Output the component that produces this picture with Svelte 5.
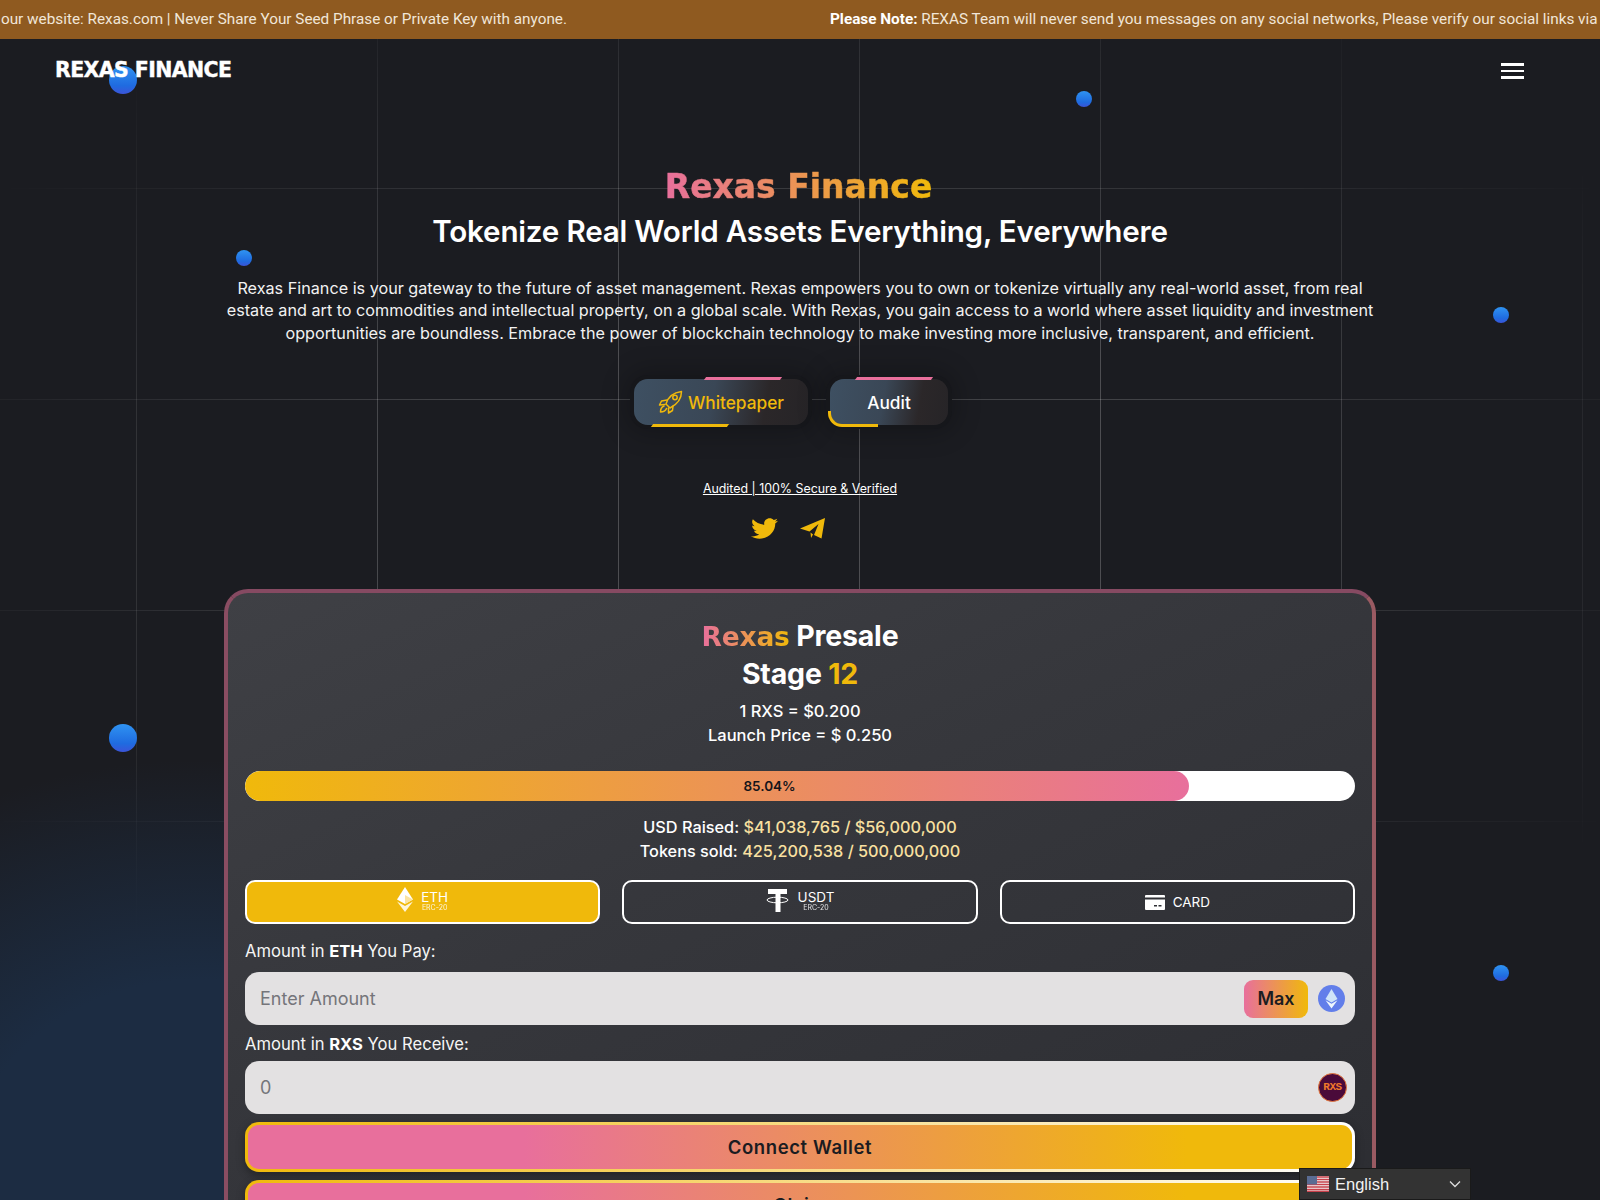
<script>
  const dots = [
    { x: 123, y: 80, r: 14 }, { x: 1084, y: 99, r: 8 }, { x: 244, y: 258, r: 8 },
    { x: 1501, y: 315, r: 8 }, { x: 123, y: 738, r: 14 }, { x: 1501, y: 973, r: 8 }
  ];
</script>

<div class="page">
  <div class="grid"></div>
  <div class="glow"></div>
  {#each dots as d}
    <span class="dot" style="left:{d.x - d.r}px;top:{d.y - d.r}px;width:{d.r * 2}px;height:{d.r * 2}px"></span>
  {/each}

  <div class="ticker">
    <div class="tick-first">
      <span class="tick"><b>Please Note:</b> REXAS Team will never send you messages on any social networks, Please verify our social links via our website: Rexas.com | Never Share Your Seed Phrase or Private Key with anyone.</span>
    </div>
    <span class="tick second"><b>Please Note:</b> REXAS Team will never send you messages on any social networks, Please verify our social links via our website: Rexas.com | Never Share Your Seed Phrase or Private Key with anyone.</span>
  </div>

  <header class="nav">
    <div class="logo">REXAS FINANCE</div>
    <button class="burger" aria-label="Menu"><i></i><i></i><i></i></button>
  </header>

  <section class="hero">
    <h1><span class="grad">Rexas Finance</span></h1>
    <h2>Tokenize Real World Assets Everything, Everywhere</h2>
    <p>Rexas Finance is your gateway to the future of asset management. Rexas empowers you to own or tokenize virtually any real-world asset, from real<br />estate and art to commodities and intellectual property, on a global scale. With Rexas, you gain access to a world where asset liquidity and investment<br />opportunities are boundless. Embrace the power of blockchain technology to make investing more inclusive, transparent, and efficient.</p>
    <div class="cta">
      <a class="btn wp">
        <svg width="26" height="24" viewBox="0 0 26 24" fill="none" stroke="#f0b90b" stroke-width="1.5" stroke-linejoin="round" stroke-linecap="round">
          <path d="M8 14 C10 7 16 2.500 23.500 1.500 C23.500 8 20 14 12 18 Z" />
          <circle cx="17" cy="7.500" r="2.200" />
          <path d="M9 10 L3.500 11 L1.500 15 L7 14.500" />
          <path d="M15 16 L14.500 20.500 L10.500 23 L10.500 18" />
          <path d="M6 16 C3.500 17 2.500 20 2.500 22 C5 22 7.500 21 8.500 18.500" />
        </svg>
        Whitepaper
      </a>
      <a class="btn audit">Audit</a>
    </div>
    <a class="audited">Audited | 100% Secure &amp; Verified</a>
    <div class="social">
      <svg width="27" height="25" viewBox="0 0 512 512" preserveAspectRatio="none" fill="#f0b90b"><path d="M459.37 151.716c.325 4.548.325 9.097.325 13.645 0 138.72-105.583 298.558-298.558 298.558-59.452 0-114.68-17.219-161.137-47.106 8.447.974 16.568 1.299 25.34 1.299 49.055 0 94.213-16.568 130.274-44.832-46.132-.975-84.792-31.188-98.112-72.772 6.498.974 12.995 1.624 19.818 1.624 9.421 0 18.843-1.3 27.614-3.573-48.081-9.747-84.143-51.98-84.143-102.985v-1.299c13.969 7.797 30.214 12.67 47.431 13.319-28.264-18.843-46.781-51.005-46.781-87.391 0-19.492 5.197-37.36 14.294-52.954 51.655 63.675 129.3 105.258 216.365 109.807-1.624-7.797-2.599-15.918-2.599-24.04 0-57.828 46.782-104.934 104.934-104.934 30.213 0 57.502 12.67 76.67 33.137 23.715-4.548 46.456-13.32 66.599-25.34-7.798 24.366-24.366 44.833-46.132 57.827 21.117-2.273 41.584-8.122 60.426-16.243-14.292 20.791-32.161 39.308-52.628 54.253z" /></svg>
      <svg width="25" height="21" viewBox="0 0 25 21" fill="#f0b90b"><path d="M0 10.500 L25 0 L21.500 20.500 L14 17 L18.500 6 L9.500 13.500 Z" /><path d="M10.500 14.500 L13 16.500 L11 20 Z" /></svg>
    </div>
  </section>

  <main class="card">
    <h3 class="first"><span class="grad">Rexas</span> Presale</h3>
    <h3 class="stage">Stage <em>12</em></h3>
    <div class="price">1 RXS = $0.200</div>
    <div class="price">Launch Price = $ 0.250</div>
    <div class="progress">
      <div class="fill" style="width:85.04%"></div>
      <span>85.04%</span>
    </div>
    <div class="stat">USD Raised: <em>$41,038,765 / $56,000,000</em></div>
    <div class="stat">Tokens sold: <em>425,200,538 / 500,000,000</em></div>
    <div class="tabs">
      <button class="tab active">
        <svg class="tabicon" width="16" height="25" viewBox="0 0 16 25"><path fill="#fff" d="M8 0 L16 12.500 L8 17 L0 12.500 Z" /><path fill="#fbe3a0" d="M8 8 L16 12.500 L8 17 Z" /><path fill="#fff" opacity=".85" d="M0 14.500 L8 19 L16 14.500 L8 25 Z" /></svg>
        <span class="tl"><span>ETH</span><small>ERC-20</small></span>
      </button>
      <button class="tab">
        <svg class="tabicon" width="24" height="24" viewBox="0 0 24 24" fill="#fff"><path d="M2 1 H21 V6 H14.500 V24 H9.500 V6 H2 Z" /><ellipse cx="11.500" cy="12" rx="10.500" ry="2.800" fill="none" stroke="#fff" stroke-width="1" /></svg>
        <span class="tl"><span>USDT</span><small>ERC-20</small></span>
      </button>
      <button class="tab">
        <svg width="20" height="15" viewBox="0 0 20 15"><path fill="#fff" d="M1 0 H19 a1 1 0 0 1 1 1 V14 a1 1 0 0 1 -1 1 H1 a1 1 0 0 1 -1 -1 V1 a1 1 0 0 1 1 -1 Z" /><rect y="2.500" width="20" height="2" fill="#2f3035" /><rect x="9" y="10" width="3" height="1.500" fill="#2f3035" /><rect x="13.500" y="10" width="3" height="1.500" fill="#2f3035" /></svg>
        <span class="cardtxt">CARD</span>
      </button>
    </div>
    <label class="lbl" for="pay">Amount in <b>ETH</b> You Pay:</label>
    <div class="field">
      <input id="pay" placeholder="Enter Amount" />
      <button class="max">Max</button>
      <svg class="coin" width="27" height="27" viewBox="0 0 27 27"><circle cx="13.500" cy="13.500" r="13.500" fill="#627eea" /><path fill="#cfe4f8" d="M13.500 4 L19.500 14 L13.500 17.500 L7.500 14 Z" /><path fill="#eef6fd" d="M7.500 15.300 L13.500 18.800 L19.500 15.300 L13.500 23.500 Z" /></svg>
    </div>
    <label class="lbl second-lbl" for="recv">Amount in <b>RXS</b> You Receive:</label>
    <div class="field">
      <input id="recv" placeholder="0" />
      <span class="rxs">RXS</span>
    </div>
    <button class="cta-main">Connect Wallet</button>
    <button class="cta-main">Claim</button>
  </main>

  <div class="lang">
    <svg width="22" height="16" viewBox="0 0 22 16">
      <rect width="22" height="16" fill="#f3f3f3" />
      <path stroke="#c8414b" stroke-width="1.300" d="M0 1 H22 M0 3.500 H22 M0 6 H22 M0 8.500 H22 M0 11 H22 M0 13.500 H22 M0 15.500 H22" />
      <rect width="10" height="8.500" fill="#5a6c93" />
    </svg>
    <span>English</span>
    <svg class="chev" width="12" height="8" viewBox="0 0 12 8" fill="none" stroke="#ddd" stroke-width="1.300"><path d="M1 1.500 L6 6.500 L11 1.500" /></svg>
  </div>
</div>

<style>
  :global(body) { margin: 0; background: #1b1c21; }
  .page {
    position: relative; height: 1200px; overflow: hidden; background: #1b1c21; color: #fff;
    font-family: Inter, "Noto Sans", sans-serif;
  }
  .grid {
    position: absolute; inset: 39px 0 0 0;
    background-image:
      linear-gradient(to right, rgba(255,255,255,.22) 1px, transparent 1px),
      linear-gradient(to bottom, rgba(255,255,255,.17) 1px, transparent 1px);
    background-size: 241px 211px;
    background-position: 136px 149px;
    -webkit-mask-image: radial-gradient(ellipse 950px 620px at 800px 470px, #000 40%, rgba(0,0,0,.3) 80%, transparent 100%);
    mask-image: radial-gradient(ellipse 950px 620px at 800px 470px, #000 40%, rgba(0,0,0,.3) 80%, transparent 100%);
  }
  .glow {
    position: absolute; left: -300px; top: 760px; width: 1000px; height: 800px;
    background: radial-gradient(closest-side, #1c2c42 45%, rgba(28,44,66,0) 100%);
  }
  .dot {
    position: absolute; border-radius: 50%;
    background: linear-gradient(to bottom, #2f93f2 0%, #1f6be0 70%, #3b54d8 100%);
  }
  .ticker {
    position: relative; display: flex; gap: 263px; height: 38px; padding-bottom: 1px; align-items: center;
    background: #8f5a20; overflow: hidden; font: 400 15.300px Roboto, sans-serif; color: #f1e6d8; white-space: nowrap;
  }
  .tick-first { flex: 0 0 567px; width: 567px; min-width: 0; display: flex; justify-content: flex-end; }
  .tick { flex-shrink: 0; }
  .tick b { font-weight: 700; color: #fff; }
  .second { flex-shrink: 0; }
  .nav {
    position: relative; display: flex; justify-content: space-between; align-items: flex-start;
    padding: 19px 76px 0 55px; height: 44px;
  }
  .logo {
    font: 700 20.500px/24px "DejaVu Sans", sans-serif; letter-spacing: -0.6px;
    -webkit-text-stroke: .4px #fff;
  }
  .burger { display: flex; flex-direction: column; gap: 4px; background: none; border: 0; padding: 5px 0 0; width: 23px; }
  .burger i { display: block; height: 2.500px; width: 23px; background: #fff; }
  .hero { position: relative; display: flex; flex-direction: column; align-items: center; text-align: center; padding-top: 63px; }
  h1 { margin: 0 0 0 -3px; font: 800 33px/44px "DejaVu Sans", sans-serif; -webkit-text-stroke: .5px transparent; }
  .grad {
    background: linear-gradient(90deg, #e86f9c 0%, #f0b90b 100%);
    -webkit-background-clip: text; background-clip: text; color: transparent;
  }
  h2 { margin: -1px 0 0; font: 600 29.600px/46px Inter, sans-serif; letter-spacing: -0.2px; }
  p { margin: 23px 0 0; font: 400 16.200px/22.400px Inter, sans-serif; color: #f2f2f2; white-space: nowrap; }
  .cta { display: flex; gap: 22px; margin-top: 35px; margin-left: -18px; }
  .btn {
    position: relative; display: flex; align-items: center; justify-content: center; gap: 4px; height: 46px; box-sizing: border-box;
    border-radius: 14px; font: 500 17.300px Inter, sans-serif;
    background: linear-gradient(100deg, #3e5062 0%, #3a4756 45%, #2b2729 75%, #262427 100%);
    box-shadow: 0 0 0 4px #16171b, 0 0 24px 10px rgba(0,0,0,.2);
  }
  .btn::before {
    content: ""; position: absolute; top: -2px; right: 27px; width: 76px; height: 3px; background: #e86f9c;
    transform: skewX(-35deg);
  }
  .btn::after {
    content: ""; position: absolute; bottom: -2px; left: 18px; width: 76px; height: 3px; background: #f0b90b;
    transform: skewX(-35deg);
  }
  .wp { width: 174px; color: #f0b90b; }
  .audit { width: 118px; color: #fff; }
  .audit::before { right: 16px; }
  .audit::after {
    left: -2px; bottom: -2px; width: 50px; height: 16px; background: none; transform: none;
    border-left: 3px solid #f0b90b; border-bottom: 3px solid #f0b90b; border-bottom-left-radius: 14px; box-sizing: border-box;
  }
  .audited { margin-top: 55px; font: 400 12.400px/18px Inter, sans-serif; text-decoration: underline; color: #fff; }
  .social { display: flex; gap: 22px; align-items: center; margin-top: 18px; height: 25px; margin-left: -24px; }
  .card {
    position: relative; margin: 48px auto 0; width: 1152px; box-sizing: border-box; padding: 25px 17px 0 17px;
    border: 4px solid #864a62; border-bottom: 0; border-right-color: #9a5a62; border-left-color: #8a4d62; border-radius: 24px 24px 0 0;
    background: linear-gradient(155deg, #3f4045 0%, #36373c 40%, #2b2c31 100%);
    height: 700px; text-align: center;
  }
  h3 { margin: 0; font: 700 28.500px/37px Inter, sans-serif; letter-spacing: -0.2px; }
  h3.first { line-height: 36px; }
  h3 .grad { font: 700 26.500px/36px "DejaVu Sans", sans-serif; }
  .stage em { font-style: normal; color: #f0b90b; }
  .price { font: 500 16.500px/24px Inter, sans-serif; }
  h3.stage + .price { margin-top: 7px; }
  .progress {
    position: relative; height: 30px; margin-top: 24px; border-radius: 15px; background: #fff; overflow: hidden;
    display: flex; align-items: center; justify-content: center; padding-right: 61px;
  }
  .fill { position: absolute; left: 0; top: 0; bottom: 0; border-radius: 15px; background: linear-gradient(90deg, #f0b90b 0%, #e86f9c 100%); }
  .progress span { position: relative; color: #15151a; font: 600 13.500px Inter, sans-serif; }
  .stat { font: 500 16.300px/24px Inter, sans-serif; }
  .progress + .stat { margin-top: 14px; }
  .stat em { font-style: normal; color: #f9e0a0; }
  .tabs { display: grid; grid-template-columns: repeat(3, 1fr); gap: 22px; margin-top: 17px; }
  .tab {
    height: 44px; border: 2px solid #fff; border-radius: 10px; background: transparent; color: #fff;
    display: flex; align-items: center; justify-content: center; gap: 8px; padding: 0;
  }
  .tab.active { background: #f0b90b; }
  .tabicon { margin-bottom: 5px; }
  .tl { display: flex; flex-direction: column; align-items: center; font: 400 13.500px/14px Inter, sans-serif; margin-bottom: 2px; }
  .tl small { font-size: 7px; line-height: 8px; opacity: .85; }
  .cardtxt { font: 400 13.500px Inter, sans-serif; }
  .lbl { display: block; text-align: left; font: 400 16.600px/24px Inter, sans-serif; margin-top: 15px; color: #f5f5f5; }
  .lbl b { font-weight: 700; color: #fff; }
  .field {
    display: flex; align-items: center; height: 53px; margin-top: 9px; padding: 0 10px 0 15px; gap: 10px;
    background: #e3e1e2; border-radius: 14px;
  }
  .second-lbl { margin-top: 7px; }
  .second-lbl + .field { margin-top: 5px; }
  .field input {
    flex: 1; min-width: 0; border: 0; outline: 0; background: none; padding: 0; font: 400 18px Inter, sans-serif; color: #333;
  }
  .field input::placeholder { color: #75757a; opacity: 1; }
  .max {
    width: 64px; height: 38px; border: 0; border-radius: 9px; font: 600 18px Inter, sans-serif; color: #1b1c21; padding: 0;
    background: linear-gradient(90deg, #e86f9c 0%, #f0b90b 100%);
  }
  .rxs {
    width: 29px; height: 29px; margin-right: -2px; border-radius: 50%; background: #4a0a3a; border: 1px solid #e8773c; box-sizing: border-box;
    color: #f0782a; font: 700 11px/27px "Liberation Mono", monospace; text-align: center; letter-spacing: -.5px;
  }
  .cta-main {
    display: block; width: 100%; height: 50px; margin-top: 8px; padding: 0; border: 3px solid transparent; border-radius: 14px;
    background: linear-gradient(90deg, #e86f9c 25%, #f0b90b 85%) padding-box, linear-gradient(90deg, #f0b90b 0%, #fff 100%) border-box;
    color: #1b1c21; font: 600 18.500px Inter, sans-serif; letter-spacing: .6px; box-shadow: 0 3px 8px rgba(0,0,0,.35);
  }
  .lang {
    position: fixed; left: 1299px; bottom: 0; width: 172px; height: 32px; box-sizing: border-box; display: flex; align-items: center;
    gap: 6px; padding: 0 7px; background: #333; border: 1px solid #1a1a1a; font: 400 16.500px "Liberation Sans", sans-serif; color: #f2f2f2;
  }
  .chev { margin-left: auto; margin-right: 2px; }
</style>
